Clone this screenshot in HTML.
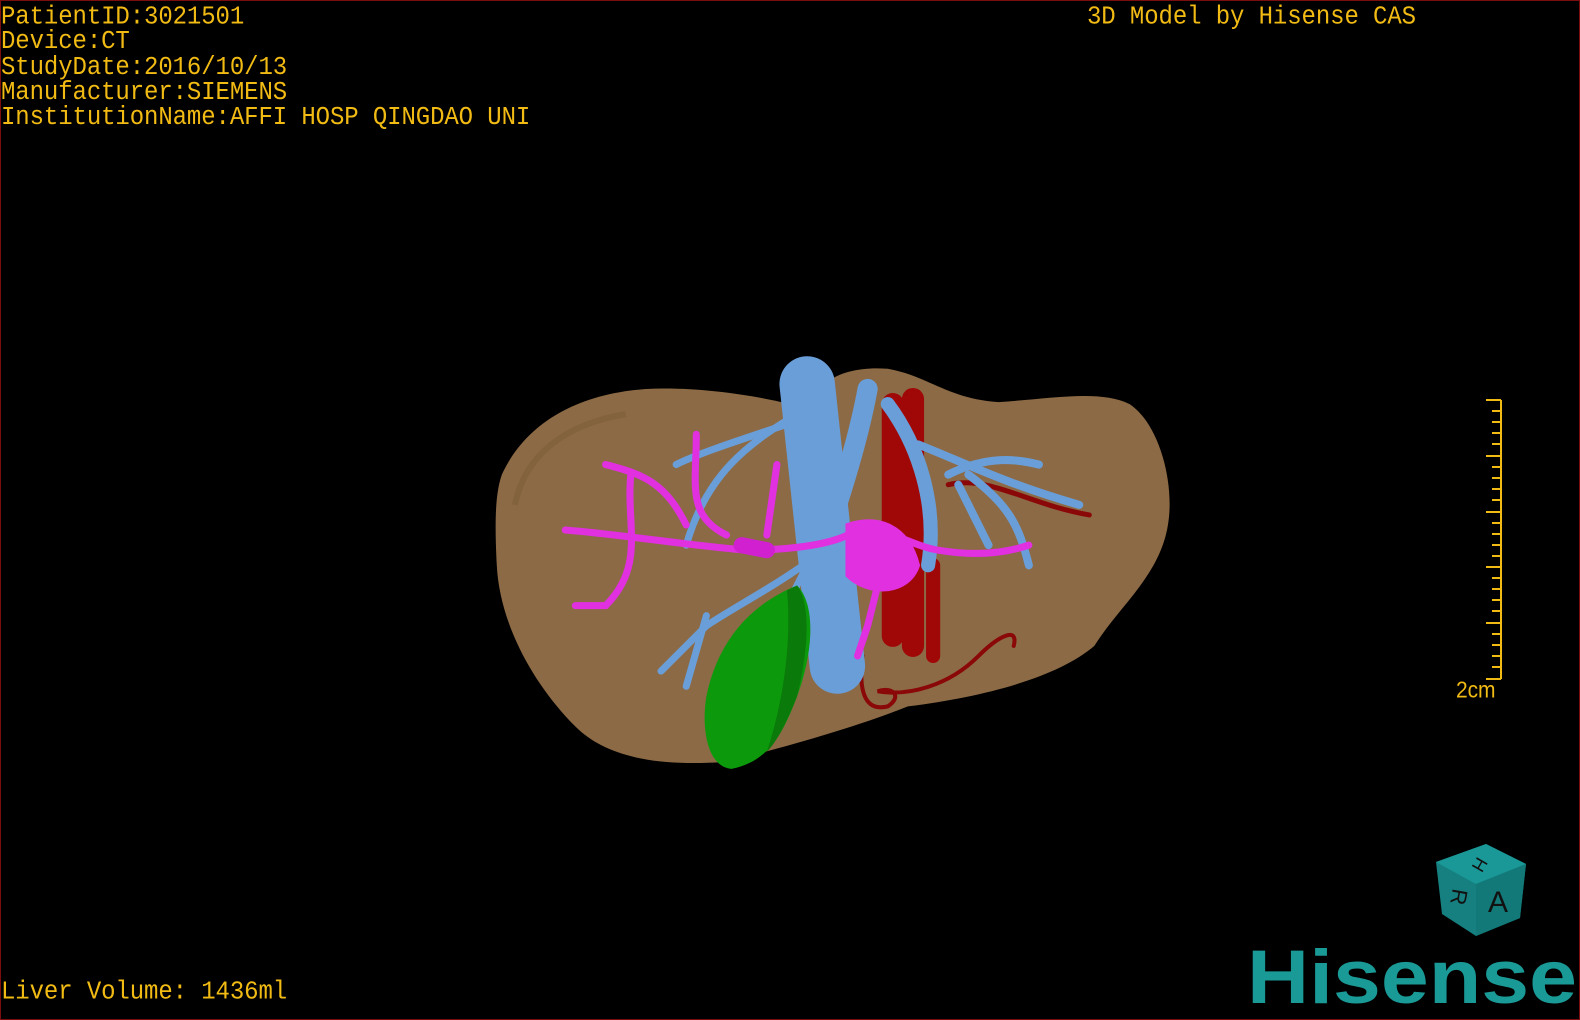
<!DOCTYPE html>
<html><head><meta charset="utf-8"><style>
html,body{margin:0;padding:0;background:#000;}
#f{position:relative;width:1580px;height:1020px;background:#000;overflow:hidden;box-sizing:border-box;border:1px solid #7a0d0d;}
.t{position:absolute;color:#f2bb14;font-family:"Liberation Mono",monospace;font-size:24px;line-height:23.3px;white-space:pre;letter-spacing:-0.1px;transform:scaleY(1.08);transform-origin:0 0;}
</style></head><body><div id="f">
<div class="t" style="left:0;top:4px">PatientID:3021501
Device:CT
StudyDate:2016/10/13
Manufacturer:SIEMENS
InstitutionName:AFFI HOSP QINGDAO UNI</div>
<div class="t" style="left:1086px;top:4px">3D Model by Hisense CAS</div>
<div class="t" style="left:0;top:979px">Liver Volume: 1436ml</div>
<div class="t" style="left:1455px;top:677px;font-family:'Liberation Sans',sans-serif;font-size:21px">2cm</div>
<svg width="1580" height="1020" style="position:absolute;left:0;top:0">
<g stroke="#f2bb14" stroke-width="2" transform="translate(10,2)">
<line x1="1490" y1="397" x2="1490" y2="676"/>
<path d="M1475 397H1490M1481 408H1490M1481 419H1490M1481 430H1490M1481 441H1490M1475 453H1490M1481 464H1490M1481 475H1490M1481 486H1490M1481 497H1490M1475 509H1490M1481 520H1490M1481 531H1490M1481 542H1490M1481 553H1490M1475 564H1490M1481 575H1490M1481 586H1490M1481 597H1490M1481 608H1490M1475 620H1490M1481 631H1490M1481 642H1490M1481 653H1490M1481 664H1490M1475 676H1490" fill="none"/>
</g>
<g transform="scale(1.0077)">
<path d="M497,470 C520,420 570,390 640,385 C700,382 770,395 800,405 C810,375 840,362 880,365 C920,372 940,395 990,398 C1040,395 1090,385 1120,400 C1150,420 1165,480 1158,520 C1150,570 1110,600 1085,640 C1050,670 980,690 900,700 C850,720 780,740 720,755 C650,760 600,750 570,720 C530,680 495,620 492,560 C490,520 490,490 497,470 Z" fill="#8c6a45"/>
<path d="M510,500 C520,450 560,420 620,410" stroke="#7a5a38" stroke-width="6" fill="none" opacity=".5"/>
<g fill="none" stroke-linecap="round">
<path d="M885,400 L885,630 M905,395 L905,640" stroke="#a00808" stroke-width="22"/>
<path d="M925,560 L925,650" stroke="#a00808" stroke-width="14"/>
<path d="M855,650 C850,690 860,705 880,700 C895,690 885,680 870,685 C900,690 940,680 970,650 C990,630 1010,620 1005,640" stroke="#8a0808" stroke-width="4"/>
<path d="M940,480 C980,470 1020,500 1080,510" stroke="#8a0808" stroke-width="5"/>
<path d="M800,380 L830,660" stroke="#6a9ed8" stroke-width="55"/>
<path d="M860,385 C850,440 830,500 810,560" stroke="#6a9ed8" stroke-width="20"/>
<path d="M880,400 C910,440 930,500 920,560" stroke="#6a9ed8" stroke-width="14"/>
<path d="M910,440 C960,460 1000,480 1070,500 M940,470 C980,450 1010,455 1030,460 M950,480 L980,540 M960,470 C1000,500 1010,520 1020,560" stroke="#6a9ed8" stroke-width="8"/>
<path d="M790,410 C740,440 700,470 680,540 M780,420 C720,440 690,450 670,460 M810,550 C770,580 730,600 700,620 L655,665 M800,560 C780,600 760,640 745,650 M700,610 L680,680 M830,560 C820,600 810,620 790,640" stroke="#6a9ed8" stroke-width="7"/>
<path d="M560,525 C620,530 680,540 740,545 C780,545 820,540 840,530 M600,460 C640,470 660,480 680,520 M625,470 C620,520 640,560 600,600 L570,600 M690,430 C690,480 680,510 720,530 M770,460 L760,530 M850,530 C880,520 900,540 930,545 C960,550 990,550 1020,540 M880,540 L860,620 L850,650" stroke="#e030e0" stroke-width="7"/>
<path d="M840,520 C870,510 900,520 910,560 C900,590 860,590 840,570 Z" fill="#e030e0" stroke="#e030e0" stroke-width="4"/>
<path d="M735,540 L760,545" stroke="#d020d0" stroke-width="16"/>
</g>
<path d="M790,580 C810,600 805,650 790,690 C775,730 760,755 725,762 C700,760 695,720 700,690 C710,640 740,600 790,580 Z" fill="#0c9a0c"/>
<path d="M790,580 C805,600 800,650 790,690 C780,715 770,735 760,745 C775,700 785,640 780,585 Z" fill="#0a7a0a"/>
</g>
<g transform="translate(1435,843)">
<polygon points="0,18 50,0 90,20 84,74 40,92 6,70" fill="#168080"/>
<polygon points="0,18 50,0 90,20 40,40" fill="#1a9898"/>
<polygon points="40,40 90,20 84,74 40,92" fill="#127878"/>
<text x="52" y="68" font-family="Liberation Sans,sans-serif" font-size="30" fill="#111">A</text>
<text x="38" y="30" font-family="Liberation Sans,sans-serif" font-size="18" fill="#111" transform="rotate(120 45 22)">H</text>
<text x="12" y="62" font-family="Liberation Sans,sans-serif" font-size="22" fill="#111" transform="rotate(100 22 55)">R</text>
</g>
<text x="1246" y="1002" font-family="Liberation Sans,sans-serif" font-weight="bold" font-size="76" fill="#1a9a96" textLength="330" lengthAdjust="spacingAndGlyphs">Hisense</text>
</svg>
</div></body></html>
